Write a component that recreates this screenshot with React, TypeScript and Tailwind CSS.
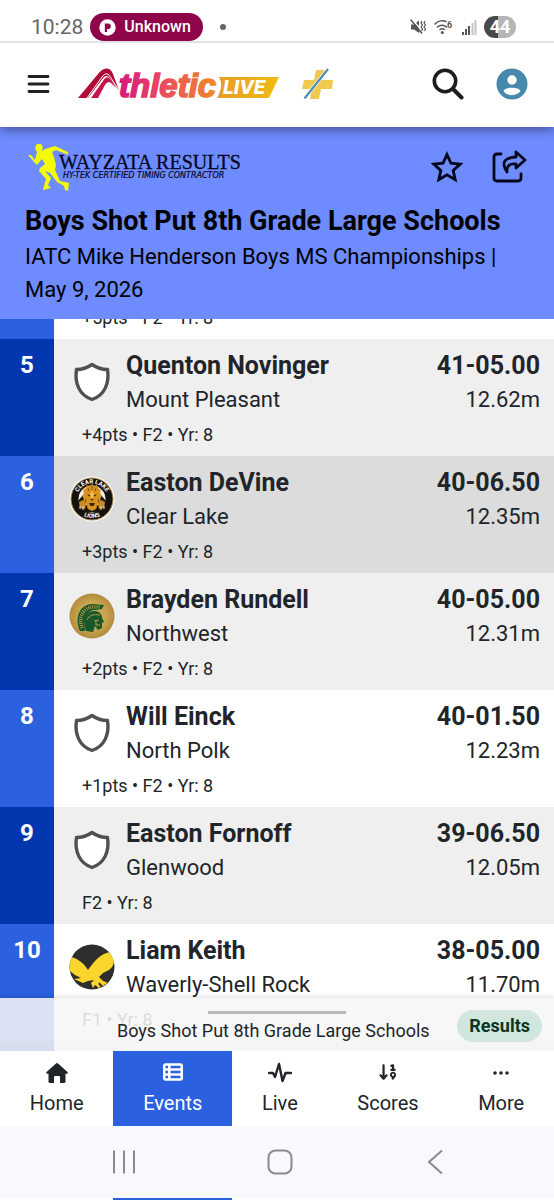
import React from "react";
import { FaArrowDown19, FaTableList } from "react-icons/fa6";

interface Result {
  place: number;
  name: string;
  school: string;
  mark: string;
  metric: string;
  info: string;
  logo?: "lions" | "trojans" | "hawks";
  bg: string;
}

const results: Result[] = [
  { place: 5, name: "Quenton Novinger", school: "Mount Pleasant", mark: "41-05.00", metric: "12.62m", info: "+4pts • F2 • Yr: 8", bg: "bg-[#efefef]" },
  { place: 6, name: "Easton DeVine", school: "Clear Lake", mark: "40-06.50", metric: "12.35m", info: "+3pts • F2 • Yr: 8", logo: "lions", bg: "bg-[#dcdcdc]" },
  { place: 7, name: "Brayden Rundell", school: "Northwest", mark: "40-05.00", metric: "12.31m", info: "+2pts • F2 • Yr: 8", logo: "trojans", bg: "bg-[#efefef]" },
  { place: 8, name: "Will Einck", school: "North Polk", mark: "40-01.50", metric: "12.23m", info: "+1pts • F2 • Yr: 8", bg: "bg-white" },
  { place: 9, name: "Easton Fornoff", school: "Glenwood", mark: "39-06.50", metric: "12.05m", info: "F2 • Yr: 8", bg: "bg-[#efefef]" },
  { place: 10, name: "Liam Keith", school: "Waverly-Shell Rock", mark: "38-05.00", metric: "11.70m", info: "F1 • Yr: 8", logo: "hawks", bg: "bg-white" },
];

const Shield = () => (
  <svg width="46" height="46" viewBox="0 0 46 46">
    <path
      d="M23 5.500 C28 9 33 10.500 38.500 10.500 C40.500 24 36 36 23 40.500 C10 36 5.500 24 7.500 10.500 C13 10.500 18 9 23 5.500Z"
      fill="#fff"
      stroke="#505050"
      strokeWidth="3.400"
      strokeLinejoin="round"
    />
  </svg>
);

const Lions = () => (
  <svg width="46" height="46" viewBox="0 0 46 46">
    <circle cx="23" cy="23" r="22.500" fill="#fff" />
    <circle cx="23" cy="23" r="21" fill="#15120e" stroke="#a98443" strokeWidth="1" />
    <circle cx="23" cy="23" r="13.500" fill="#f3eee4" />
    <defs>
      <path id="lionTop" d="M7.500 23 A15.500 15.500 0 0 1 38.500 23" />
      <path id="lionBottom" d="M4 23 A19 19 0 0 0 42 23" />
    </defs>
    <g fill="#fff" fontFamily="Roboto, sans-serif" fontWeight="700" fontSize="6" textAnchor="middle">
      <text><textPath href="#lionTop" startOffset="50%">CLEAR LAKE</textPath></text>
      <text><textPath href="#lionBottom" startOffset="50%">LIONS</textPath></text>
    </g>
    <path d="M14 19 L9 25 L9 33 L16 36 L30 36 L37 33 L37 25 L32 19 L30 29 L16 29Z" fill="#1c1710" />
    <path d="M23 8 L25 10 L28 9 L29 12 L32 14 L31 17 L33 20 L31 22 L32 27 L29 28 L27 33 L23 35 L19 33 L17 28 L14 27 L15 22 L13 20 L15 17 L14 14 L17 12 L18 9 L21 10Z" fill="#d9921d" />
    <path d="M10 26 L14 24 L17 28 L16 33 L11 32Z M36 26 L32 24 L29 28 L30 33 L35 32Z" fill="#c98a25" />
    <path d="M18 18 L22 19.500 L20 20.500Z M28 18 L24 19.500 L26 20.500Z M21.500 23 H24.500 L23 25Z M20 27 L26 27 L24.500 30 L21.500 30Z" fill="#3d2408" />
    <path d="M17 23 L16 27 M29 23 L30 27 M19 12 L20 15 M27 12 L26 15 M23 10 V14" stroke="#7a4a0c" strokeWidth="0.900" />
    <path d="M23 15 L25 18 L24 22 L22 22 L21 18Z" fill="#f5bd47" />
    <path d="M11 30 L11 33 M14 30 L14 34 M32 30 L32 34 M35 30 L35 33" stroke="#fff" strokeWidth="0.800" />
  </svg>
);

const Trojans = () => (
  <svg width="46" height="46" viewBox="0 0 46 46">
    <defs>
      <radialGradient id="gold">
        <stop offset="0.600" stopColor="#c9a651" />
        <stop offset="1" stopColor="#b18b3e" />
      </radialGradient>
    </defs>
    <circle cx="23" cy="23" r="22.500" fill="url(#gold)" />
    <path d="M11 38 C5 24 11 11 24 11 L35 12 L33 16 L27 17 C19 16 14 24 16 38Z" fill="#18582b" />
    <path d="M13 35 C9 24 14 14 25 14 L31 14" fill="none" stroke="#c9a651" strokeWidth="3.500" strokeDasharray="0.800 1.300" />
    <path d="M17 38 C14 30 15 18 25 18 C30 18 33 21 33 25 L35 29 L33 30 L33 35 L29 37 L26 33 L24 39Z" fill="#18582b" />
    <path d="M18 27 C20 22 25 21 31 22 M25 28 L30 27 M27 27 L27 32 L31 32" fill="none" stroke="#b99a49" strokeWidth="1" />
  </svg>
);

const Hawks = () => (
  <svg width="46" height="46" viewBox="0 0 46 46">
    <clipPath id="hawkClip">
      <circle cx="23" cy="23" r="22.500" />
    </clipPath>
    <circle cx="23" cy="23" r="22.500" fill="#2e2e2d" />
    <g clipPath="url(#hawkClip)" fill="#fbd52b">
      <path d="M0 13 C7 13 15 19 19 26 C24 19 31 9 42 8 C47 13 46 22 40 26 L34 29 L30 33 L33 36 L37 40 L34 42 L30 38 L29 43 L26 41 L24 44 L22 39 L25 36 L19 37 L14 39 L5 35 L12 34 L6 31 L1 27Z" />
      <path d="M32 36 L39 39 L36 40Z M27 38 L32 43 L29 44Z" />
    </g>
  </svg>
);

const SchoolLogo = ({ logo }: { logo?: string }) => {
  if (logo === "lions") return <Lions />;
  if (logo === "trojans") return <Trojans />;
  if (logo === "hawks") return <Hawks />;
  return <Shield />;
};

const StatusBar = () => (
  <div className="relative z-20 flex h-[43px] shrink-0 items-end border-b-2 border-[#e2e2e2] bg-white pr-[38px] pl-[31px]">
    <span className="text-[21px] leading-7 text-[#666]">10:28</span>
    <span className="ml-[7px] flex h-7 items-center gap-2 rounded-full bg-[#8e0549] pr-3 pl-[9px] text-base font-medium text-white">
      <svg width="17" height="17" viewBox="0 0 17 17">
        <circle cx="8.500" cy="8.500" r="8.200" fill="#fff" />
        <path d="M5.800 13V4.500H9a2.800 2.800 0 0 1 0 5.600H8V13Z" fill="#8e0549" />
      </svg>
      Unknown
    </span>
    <span className="mb-[11px] ml-[17px] h-[6px] w-[6px] rounded-full bg-[#666]" />
    <div className="mb-[3px] ml-auto flex items-center gap-2">
      <svg width="16" height="16" viewBox="0 0 16 16" fill="none" stroke="#555" strokeWidth="1.500">
        <path d="M1 5.500H4L9 1.500V14L4 10.500H1Z" fill="#555" stroke="none" />
        <path d="M1 -1 L13 13" stroke="#fff" strokeWidth="1.500" />
        <path d="M0.500 0.500 L12 14.500" />
        <path d="M12 2l-1 2 1.500 2-1.500 2 1.500 2-1 2M15 2l-1 2 1.500 2-1.500 2 1.500 2-1 2" strokeWidth="1.200" />
      </svg>
      <svg width="20" height="16" viewBox="0 0 20 16" fill="none" stroke="#555" strokeWidth="1.500" strokeLinecap="round">
        <path d="M1 5C4 1.500 9 1 12 2.500M3.500 8C6 5.500 10 5.500 12.500 8M6 10.500C7.500 9.500 9 9.500 10.500 10.500" />
        <circle cx="8.300" cy="13.500" r="0.800" fill="#555" />
        <text x="13" y="8.500" fill="#555" stroke="none" fontSize="9" fontWeight="700" fontFamily="Roboto, sans-serif">6</text>
      </svg>
      <svg width="15" height="15" viewBox="0 0 15 15">
        <path d="M0 12h2v3H0zM3 9h2v6H3zM6 6h2v9H6z" fill="#555" />
        <path d="M9.500 3h2v12h-2zM12.500 0h2v15h-2z" fill="#c4c4c4" />
      </svg>
      <span className="-ml-px flex h-[22px] w-8 items-center justify-center rounded-full bg-linear-to-r from-[#494949] from-45% to-[#b5b5b5] to-45% text-lg font-bold text-white">
        44
      </span>
    </div>
  </div>
);

const AthleticLogo = () => (
  <svg width="202" height="32" viewBox="0 0 202 32" role="img" aria-label="Athletic Live">
    <defs>
      <linearGradient id="word" gradientUnits="userSpaceOnUse" x1="40" y1="0" x2="138" y2="0">
        <stop offset="0" stopColor="#d6197b" />
        <stop offset="0.500" stopColor="#e9505c" />
        <stop offset="1" stopColor="#ee8a28" />
      </linearGradient>
      <linearGradient id="flag" x1="0" y1="0" x2="1" y2="0">
        <stop offset="0" stopColor="#e99b29" />
        <stop offset="1" stopColor="#eebd10" />
      </linearGradient>
    </defs>
    <path d="M0 30 L20 6 Q26 -1 31 1 Q34 2 36 9 L41 22 L38 19 L33 12 Q29 5 25 10 L10 30Z" fill="#b00b38" />
    <path d="M13 30 L25 13 Q29 6 33 12 L38 20 L33 15 Q30 12 27 17 L20 30Z" fill="#c4154c" />
    <path d="M9 30 L24 9 Q29 2 33 10 L40 21" fill="none" stroke="#fff" strokeWidth="1" />
    <text x="41" y="29" fill="url(#word)" stroke="url(#word)" strokeWidth="1.600" fontFamily="'Liberation Sans', sans-serif" fontWeight="700" fontStyle="italic" fontSize="33">
      thletic
    </text>
    <path d="M141 9 H201 L191 30 H139 Q146 18 141 9Z" fill="url(#flag)" />
    <text x="145" y="26" fill="#fff" fontFamily="Inter, sans-serif" fontWeight="800" fontStyle="italic" fontSize="19">
      LIVE
    </text>
  </svg>
);

const Navbar = () => (
  <nav className="z-10 flex h-[84px] shrink-0 items-center bg-white px-[26px] pb-[2px] shadow-[0_3px_10px_rgba(0,0,0,0.4)]">
    <button aria-label="Menu" className="flex w-6 justify-center">
      <svg width="24" height="20" viewBox="0 0 24 20" stroke="#202125" strokeWidth="2.800" strokeLinecap="round">
        <path d="M3 2.500H22M3 10H22M3 17.500H22" />
      </svg>
    </button>
    <a href="#" className="ml-7">
      <AthleticLogo />
    </a>
    <a href="#" aria-label="Plus" className="ml-[22px]">
      <svg width="32" height="32" viewBox="0 0 32 32">
        <path d="M14 2H22L20 12H31L30 21H19L17 31H8L10 21H0L2 12H12Z" fill="#f2c94f" />
        <path d="M2.500 30.500L26 1" stroke="#fff" strokeWidth="3.600" />
        <path d="M2.500 30.500L26 1" stroke="#4c8fb5" strokeWidth="2.200" />
      </svg>
    </a>
    <button aria-label="Search" className="ml-auto">
      <svg width="32" height="32" viewBox="0 0 32 32" fill="none" stroke="#1d1d20" strokeLinecap="round">
        <circle cx="13" cy="13" r="10.700" strokeWidth="3.600" />
        <path d="M21 21L29.500 29.500" strokeWidth="4" />
      </svg>
    </button>
    <button aria-label="Account" className="ml-8">
      <svg width="32" height="32" viewBox="0 0 32 32">
        <circle cx="16" cy="16" r="15.500" fill="#4788ad" />
        <circle cx="16" cy="12" r="4.700" fill="#fff" />
        <path d="M7.500 23C9 18.500 23 18.500 24.500 23C21 28.500 11 28.500 7.500 23Z" fill="#fff" />
      </svg>
    </button>
  </nav>
);

const TimerLogo = () => (
  <svg width="222" height="48" viewBox="0 0 222 48" role="img" aria-label="Wayzata Results">
    <g fill="#f3fc05">
      <ellipse cx="14" cy="5" rx="3.600" ry="4.200" />
      <path d="M12 9 L17 8 L20 6 L30 3 L43 9 L43 12 L41 11 L31 7 L27 9 L29 14 L31 22 L30 27 L35 38 L44 40 L43 48 L40 47 L39 43 L32 39 L25 30 L20 28 L26 35 L23 42 L26 45 L18 47 L19 43 L21 36 L14 28 L15 25 L20 21 L17 16 L12 22 L9 19 L3 12 L6 12 L10 17Z" />
    </g>
    <text x="34" y="26" fill="#05071f" stroke="#05071f" strokeWidth="0.300" fontFamily="'Liberation Serif', serif" fontSize="20">
      WAYZATA RESULTS
    </text>
    <text x="38" y="35" fill="#05071f" stroke="#05071f" strokeWidth="0.200" fontFamily="'DejaVu Sans', sans-serif" fontStyle="italic" fontSize="8">
      HY-TEK CERTIFIED TIMING CONTRACTOR
    </text>
  </svg>
);

const EventHeader = () => (
  <header className="h-[192px] shrink-0 bg-[#6e8bff] pt-4 pr-[27px] pl-[25px] text-black">
    <div className="flex items-center">
      <TimerLogo />
      <button aria-label="Favorite" className="ml-auto">
        <svg width="32" height="32" viewBox="0 0 32 32" fill="none" stroke="#05071a" strokeWidth="2.800">
          <path d="M16 3.500L19.900 12.100L29.200 13.100L22.200 19.400L24.200 28.600L16 23.900L7.800 28.600L9.800 19.400L2.800 13.100L12.100 12.100Z" />
        </svg>
      </button>
      <button aria-label="Share" className="ml-7">
        <svg width="36" height="34" viewBox="0 0 36 34" fill="none" stroke="#05071a" strokeWidth="2.800" strokeLinecap="round" strokeLinejoin="round">
          <path d="M10 4H6Q3 4 3 7V28Q3 31 6 31H27Q30 31 30 28V24" />
          <path d="M25 2L34 10L25 18V14Q15 13 16 22Q7 8 25 7Z" />
        </svg>
      </button>
    </div>
    <h1 className="mt-3 text-[27px] leading-9 font-bold">Boys Shot Put 8th Grade Large Schools</h1>
    <p className="pt-px text-[22px] leading-[33px]">IATC Mike Henderson Boys MS Championships | May 9, 2026</p>
  </header>
);

const ResultRow = ({ result }: { result: Result }) => (
  <li className={`flex h-[117px] ${result.bg}`}>
    <div
      className={`w-[54px] shrink-0 pt-2 text-center text-2xl leading-9 font-bold text-white ${
        result.place % 2 ? "bg-[#0037ae]" : "bg-[#2b60df]"
      }`}
    >
      {result.place}
    </div>
    <div className="min-w-0 flex-1 pt-[9px] pr-[14px] pl-[15px]">
      <div className="flex h-[68px]">
        <div className="w-[57px] shrink-0 pt-[11px]">
          <SchoolLogo logo={result.logo} />
        </div>
        <div className="min-w-0 flex-1">
          <div className="text-[25px] leading-9 font-bold">{result.name}</div>
          <div className="text-[22px] leading-8">{result.school}</div>
        </div>
        <div className="text-right">
          <div className="text-[25px] leading-9 font-bold">{result.mark}</div>
          <div className="text-[22px] leading-8">{result.metric}</div>
        </div>
      </div>
      <div className="pt-[5px] pl-[13px] text-lg leading-7">{result.info}</div>
    </div>
  </li>
);

const EventSheet = () => (
  <div className="absolute inset-x-0 bottom-0 h-[53px] bg-[#f6f6f6]/87 pt-[13px] shadow-[0_0_6px_rgba(0,0,0,0.2)]">
    <div className="mx-auto h-[3px] w-[138px] bg-[#b9b9b9]" />
    <div className="flex items-center justify-between pr-3 pl-[117px]">
      <span className="pt-[3px] text-lg leading-7">Boys Shot Put 8th Grade Large Schools</span>
      <span className="-mt-2 rounded-full bg-[#d1e7dd] px-3 text-lg leading-8 font-bold text-[#0a3622]">Results</span>
    </div>
  </div>
);

const HomeIcon = () => (
  <svg width="24" height="22" viewBox="0 0 24 22">
    <path
      d="M11 1.500Q12 .500 13 1.500L22.500 10Q23.500 11.500 22 11.700H20.500V19.500Q20.500 21 19 21H15V15Q15 14 14 14H10Q9 14 9 15V21H5Q3.500 21 3.500 19.500V11.700H2Q.500 11.500 1.500 10Z"
      fill="currentColor"
    />
  </svg>
);

const LiveIcon = () => (
  <svg width="24" height="22" viewBox="0 0 24 22" fill="none" stroke="currentColor" strokeWidth="2.400" strokeLinecap="round" strokeLinejoin="round">
    <path d="M1 11H5L7 15L11 2L14.500 19L17.500 11H23" />
  </svg>
);

const MoreIcon = () => (
  <svg width="24" height="22" viewBox="0 0 24 22" fill="currentColor">
    <circle cx="6" cy="11" r="1.800" />
    <circle cx="12" cy="11" r="1.800" />
    <circle cx="18" cy="11" r="1.800" />
  </svg>
);

const tabs = [
  { label: "Home", icon: <HomeIcon /> },
  { label: "Events", icon: <FaTableList size={20} />, active: true },
  { label: "Live", icon: <LiveIcon /> },
  { label: "Scores", icon: <FaArrowDown19 size={20} /> },
  { label: "More", icon: <MoreIcon /> },
];

const TabBar = () => (
  <nav className="flex h-[75px] shrink-0 bg-white">
    {tabs.map((tab) => (
      <a
        key={tab.label}
        href="#"
        className={`flex flex-auto flex-col items-center pt-[11px] text-xl leading-[30px] ${
          tab.active ? "bg-[#2b60df] text-white" : ""
        }`}
      >
        <span className="flex h-[26px] items-start">{tab.icon}</span>
        {tab.label}
      </a>
    ))}
  </nav>
);

const SystemNav = () => (
  <div className="flex h-[72px] shrink-0 items-center justify-between bg-[#f8f8ff] pr-[106px] pl-[111px]">
    <button aria-label="Recent apps">
      <svg width="26" height="26" viewBox="0 0 26 26" stroke="#89898e" strokeWidth="2">
        <path d="M3 1.500V24.500M13 1.500V24.500M23 1.500V24.500" />
      </svg>
    </button>
    <button aria-label="Home screen">
      <svg width="26" height="26" viewBox="0 0 26 26" fill="none" stroke="#89898e" strokeWidth="2">
        <rect x="1.500" y="1.500" width="23" height="23" rx="7" />
      </svg>
    </button>
    <button aria-label="Back">
      <svg width="26" height="26" viewBox="0 0 26 26" fill="none" stroke="#89898e" strokeWidth="2">
        <path d="M20 1.500L7 13L20 24.500" />
      </svg>
    </button>
  </div>
);

const App: React.FC = () => {
  return (
    <div className="flex h-screen flex-col bg-white font-[Roboto,sans-serif] text-[#212529]">
      <StatusBar />
      <Navbar />
      <EventHeader />
      <main className="relative min-h-0 flex-1 overflow-hidden">
        {/* tail of 4th place, the rest is scrolled away */}
        <div className="flex h-5 items-end overflow-hidden">
          <div className="h-full w-[54px] bg-[#2b60df]" />
          <div className="pb-[7px] pl-7 text-lg leading-7">+5pts • F2 • Yr: 8</div>
        </div>
        <ol>
          {results.map((result) => (
            <ResultRow key={result.place} result={result} />
          ))}
        </ol>
        {/* top of 11th place, under the sheet */}
        <div className="flex h-5 bg-[#efefef]">
          <div className="w-[54px] bg-[#0037ae]" />
        </div>
        <EventSheet />
      </main>
      <TabBar />
      <SystemNav />
      <div className="h-[2px] shrink-0 bg-white pl-[113px]">
        <div className="h-full w-[119px] bg-[#2b60df]" />
      </div>
    </div>
  );
};

export default App;
